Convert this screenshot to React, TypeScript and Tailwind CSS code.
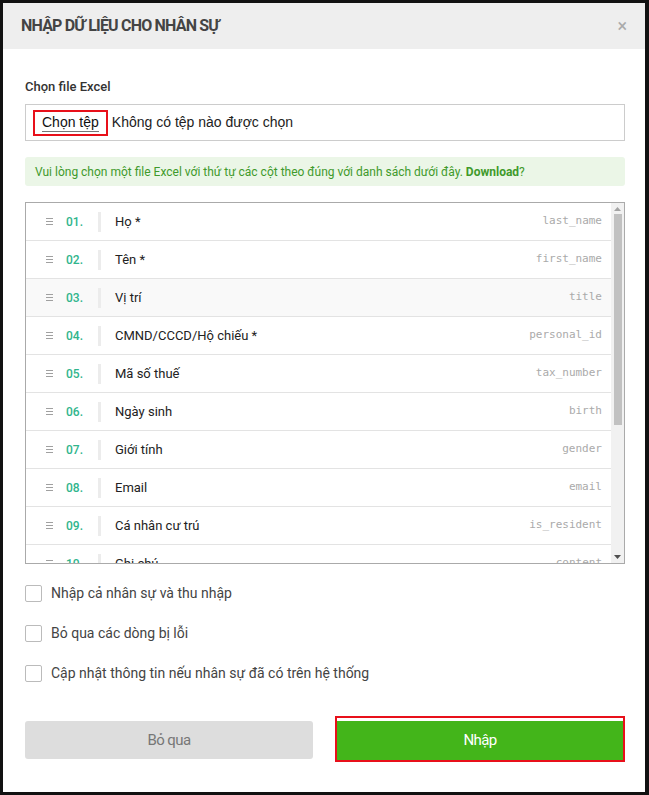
import { useState } from "react";

type Field = {
  no: string;
  label: string;
  code: string;
};

const FIELDS: Field[] = [
  { no: "01.", label: "Họ *", code: "last_name" },
  { no: "02.", label: "Tên *", code: "first_name" },
  { no: "03.", label: "Vị trí", code: "title" },
  { no: "04.", label: "CMND/CCCD/Hộ chiếu *", code: "personal_id" },
  { no: "05.", label: "Mã số thuế", code: "tax_number" },
  { no: "06.", label: "Ngày sinh", code: "birth" },
  { no: "07.", label: "Giới tính", code: "gender" },
  { no: "08.", label: "Email", code: "email" },
  { no: "09.", label: "Cá nhân cư trú", code: "is_resident" },
  { no: "10.", label: "Ghi chú", code: "content" },
];

const OPTIONS = [
  "Nhập cả nhân sự và thu nhập",
  "Bỏ qua các dòng bị lỗi",
  "Cập nhật thông tin nếu nhân sự đã có trên hệ thống",
];

const DragIcon = () => (
  <svg width="7" height="7" viewBox="0 0 7 7" className="shrink-0">
    <rect x="0" y="0" width="7" height="1" fill="#a0a0a0" />
    <rect x="0" y="3" width="7" height="1" fill="#a0a0a0" />
    <rect x="0" y="6" width="7" height="1" fill="#a0a0a0" />
  </svg>
);

const FieldRow = ({ field, hover }: { field: Field; hover: boolean }) => (
  <div
    className={`flex h-[38px] shrink-0 items-center border-b border-[#e3e3e3] pl-[20px] pr-[9px] ${
      hover ? "bg-[#f9f9f9]" : "bg-white"
    }`}
  >
    <DragIcon />
    <span className="ml-[13px] w-[32px] text-[12px] font-medium text-[#30b58c]">{field.no}</span>
    <span className="h-[20px] w-[3px] bg-[#ececec]" />
    <span className="ml-[14px] flex-1 text-[13px] text-[#222]">{field.label}</span>
    <span className="font-['DejaVu_Sans_Mono',monospace] text-[11px] text-[#aaa]">{field.code}</span>
  </div>
);

export default function App() {
  const [checked, setChecked] = useState<boolean[]>([false, false, false]);

  return (
    <div className="h-[795px] w-[649px] bg-[#111] pl-[3px] pt-[3px] font-['Roboto',sans-serif]">
      <div className="flex h-[789px] w-[642px] flex-col bg-white">
        {/* header */}
        <div className="flex h-[46px] items-center justify-between bg-[#eeeeee] pl-[18px] pr-[18px]">
          <h2 className="text-[16px] font-bold tracking-[-0.8px] text-[#444]">NHẬP DỮ LIỆU CHO NHÂN SỰ</h2>
          <span className="text-[18px] leading-none text-[#aaa]">×</span>
        </div>

        <div className="flex flex-1 flex-col pl-[22px] pr-[20px]">
          <label className="mt-[29px] h-[18px] text-[13px] font-medium leading-[18px] text-[#333]">
            Chọn file Excel
          </label>

          <div className="mt-[8px] flex h-[37px] items-center border border-[#ccc] pl-[7px]">
            <div className="flex h-[26px] items-center border-2 border-[#e8101a] px-[7px]">
              <span className="border-b border-[#767676] font-['Liberation_Sans',Arial,sans-serif] text-[14px] leading-[17px] text-[#111]">
                Chọn tệp
              </span>
            </div>
            <span className="ml-[4px] font-['Liberation_Sans',Arial,sans-serif] text-[14px] text-[#222]">
              Không có tệp nào được chọn
            </span>
          </div>

          <div className="mt-[16px] flex h-[29px] items-center rounded-[3px] bg-[#ebf6e7] px-[10px] text-[12px] text-[#3f9a2b]">
            Vui lòng chọn một file Excel với thứ tự các cột theo đúng với danh sách dưới đây.&nbsp;
            <span className="font-bold">Download</span>?
          </div>

          {/* field list */}
          <div className="mt-[16px] flex h-[362px] border border-[#aaa]">
            <div className="flex flex-1 flex-col overflow-hidden">
              {FIELDS.map((f, i) => (
                <FieldRow key={f.code} field={f} hover={i === 2} />
              ))}
            </div>
            <div className="flex w-[13px] flex-col items-center bg-[#f1f1f1]">
              <svg width="7" height="4" viewBox="0 0 7 4" className="mt-[4px]">
                <path d="M0 4 L3.5 0 L7 4 Z" fill="#a3a3a3" />
              </svg>
              <div className="mt-[3px] h-[211px] w-[8px] bg-[#c1c1c1]" />
              <div className="flex-1" />
              <svg width="7" height="4" viewBox="0 0 7 4" className="mb-[4px]">
                <path d="M0 0 L7 0 L3.5 4 Z" fill="#505050" />
              </svg>
            </div>
          </div>

          {/* options */}
          <div className="mt-[9px] flex flex-col">
            {OPTIONS.map((o, i) => (
              <div
                key={o}
                onClick={() => setChecked((c) => c.map((v, j) => (j === i ? !v : v)))}
                className="flex h-[40px] cursor-pointer items-center"
              >
                <span
                  className={`h-[17px] w-[17px] rounded-[2px] border border-[#bbb] ${
                    checked[i] ? "bg-[#43b51a]" : "bg-white"
                  }`}
                />
                <span className="ml-[9px] text-[14px] text-[#444]">{o}</span>
              </div>
            ))}
          </div>

          {/* actions */}
          <div className="mt-[23px] flex items-center gap-[22px]">
            <button className="mt-[2px] h-[38px] w-[288px] rounded-[3px] bg-[#dddddd] text-[15px] tracking-[-0.6px] text-[#777]">
              Bỏ qua
            </button>
            <div className="h-[46px] w-[290px] border-2 border-[#e8101a] bg-white pt-[3px]">
              <button className="h-[39px] w-full bg-[#43b51a] text-[15px] tracking-[-0.6px] text-white">Nhập</button>
            </div>
          </div>
        </div>
      </div>
    </div>
  );
}
